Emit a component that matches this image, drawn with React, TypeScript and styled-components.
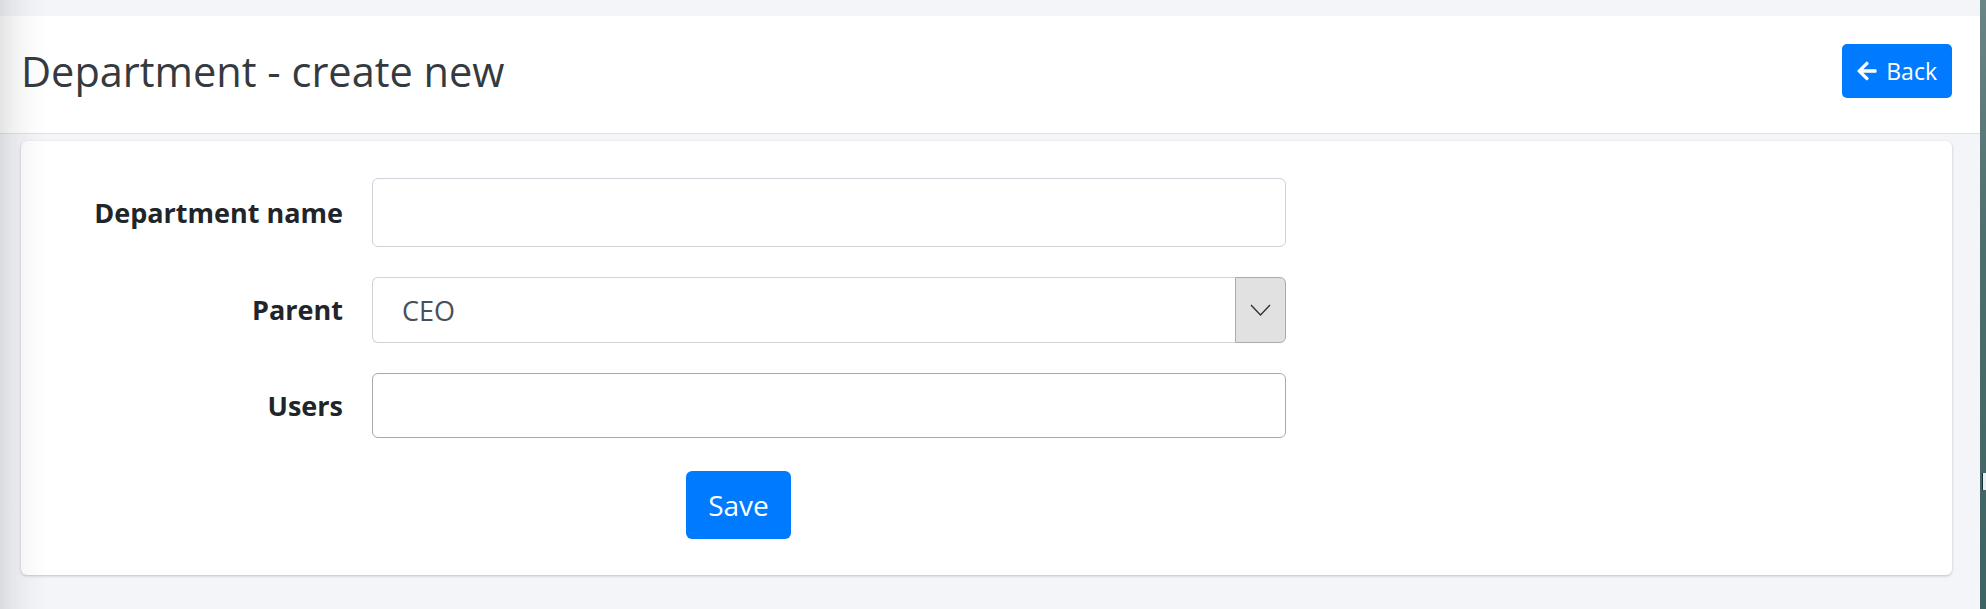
import React from 'react'
import styled, { createGlobalStyle } from 'styled-components'
import { FaArrowLeft } from 'react-icons/fa'

const GlobalStyle = createGlobalStyle`
  html, body {
    margin: 0;
    padding: 0;
    height: 100%;
  }
  body {
    background: #f4f5f8;
    font-family: "Open Sans", "Noto Sans", sans-serif;
    overflow: hidden;
  }
`

export default function App() {
  return (
    <>
      <GlobalStyle />
      <Page>
        <Main>
          <Header>
            <Title>Department - create new</Title>
            <BackButton type="button">
              <FaArrowLeft size={22} />
              Back
            </BackButton>
          </Header>
          <Card>
            <Form>
              <Label>Department name</Label>
              <TextInput $height={69} />

              <Label>Parent</Label>
              <Select>
                <SelectValue>CEO</SelectValue>
                <ArrowBox>
                  <svg width="21" height="12" viewBox="0 0 21 12">
                    <polyline
                      points="1,1 10.5,11 20,1"
                      fill="none"
                      stroke="#333"
                      strokeWidth="1.4"
                    />
                  </svg>
                </ArrowBox>
              </Select>

              <Label>Users</Label>
              <TextInput $height={65} $dark />

              <Actions>
                <SaveButton type="button">Save</SaveButton>
              </Actions>
            </Form>
          </Card>
        </Main>
        <EdgeStrip>
          <EdgeMark />
        </EdgeStrip>
      </Page>
    </>
  )
}

const Page = styled.div`
  position: relative;
  display: flex;
  height: 100vh;

  &::before {
    content: '';
    position: absolute;
    inset: 0 auto 0 0;
    width: 48px;
    pointer-events: none;
    z-index: 2;
    background: linear-gradient(
      to right,
      rgba(0, 0, 0, 0.11) 0px,
      rgba(0, 0, 0, 0.06) 12px,
      rgba(0, 0, 0, 0.02) 30px,
      rgba(0, 0, 0, 0) 48px
    );
  }
`

const Main = styled.div`
  flex: 1;
  padding-top: 16px;
`

const Header = styled.header`
  display: flex;
  justify-content: space-between;
  align-items: center;
  box-sizing: border-box;
  height: 118px;
  padding: 0 28px 5px 21px;
  background: #fff;
  border-bottom: 1px solid #dee2e6;
`

const Title = styled.h1`
  margin: 0;
  font-size: 41.5px;
  font-weight: 400;
  color: #343a40;
  line-height: 1.2;
`

const BackButton = styled.button`
  display: flex;
  align-items: center;
  gap: 8px;
  height: 54px;
  margin-top: -2px;
  padding: 0 15px 0 14px;
  border: none;
  border-radius: 5px;
  background: #007bff;
  color: #fff;
  font-family: inherit;
  font-size: 23px;
`

const Card = styled.section`
  margin: 7px 28px 0 21px;
  padding: 37px 0 36px;
  background: #fff;
  border-radius: 6px;
  box-shadow: 0 1px 3px rgba(0, 0, 0, 0.22);
`

const Form = styled.div`
  display: grid;
  grid-template-columns: 322px 914px;
  column-gap: 29px;
  row-gap: 30px;
  align-items: center;
`

const Label = styled.label`
  text-align: right;
  font-size: 27px;
  font-weight: 700;
  color: #212529;
  line-height: 1.3;
`

const TextInput = styled.div<{ $height: number; $dark?: boolean }>`
  box-sizing: border-box;
  height: ${p => p.$height}px;
  border: 1px solid ${p => (p.$dark ? '#a9a9a9' : '#ced4da')};
  border-radius: 6px;
  background: #fff;
`

const Select = styled.div`
  display: flex;
  height: 66px;
`

const SelectValue = styled.div`
  flex: 1;
  display: flex;
  align-items: center;
  padding-left: 29px;
  border: 1px solid #ced4da;
  border-right: none;
  border-radius: 6px 0 0 6px;
  font-size: 27px;
  color: #495057;
`

const ArrowBox = styled.div`
  display: flex;
  align-items: center;
  justify-content: center;
  box-sizing: border-box;
  width: 51px;
  background: #e1e1e1;
  border: 1px solid #ababab;
  border-radius: 0 6px 6px 0;
`

const Actions = styled.div`
  grid-column: 2;
  margin-top: 3px;
`

const SaveButton = styled.button`
  height: 68px;
  width: 105px;
  margin-left: 314px;
  border: none;
  border-radius: 6px;
  background: #007bff;
  color: #fff;
  font-family: inherit;
  font-size: 28px;
`

const EdgeStrip = styled.div`
  width: 6px;
  padding-top: 473px;
  background: linear-gradient(to bottom, #6b8585, #4c6e6d 40%, #3f6362);
`

const EdgeMark = styled.div`
  width: 3px;
  height: 17px;
  margin-left: 2px;
  background: #e8eef2;
  border-left: 1px solid #1c2a33;
`
